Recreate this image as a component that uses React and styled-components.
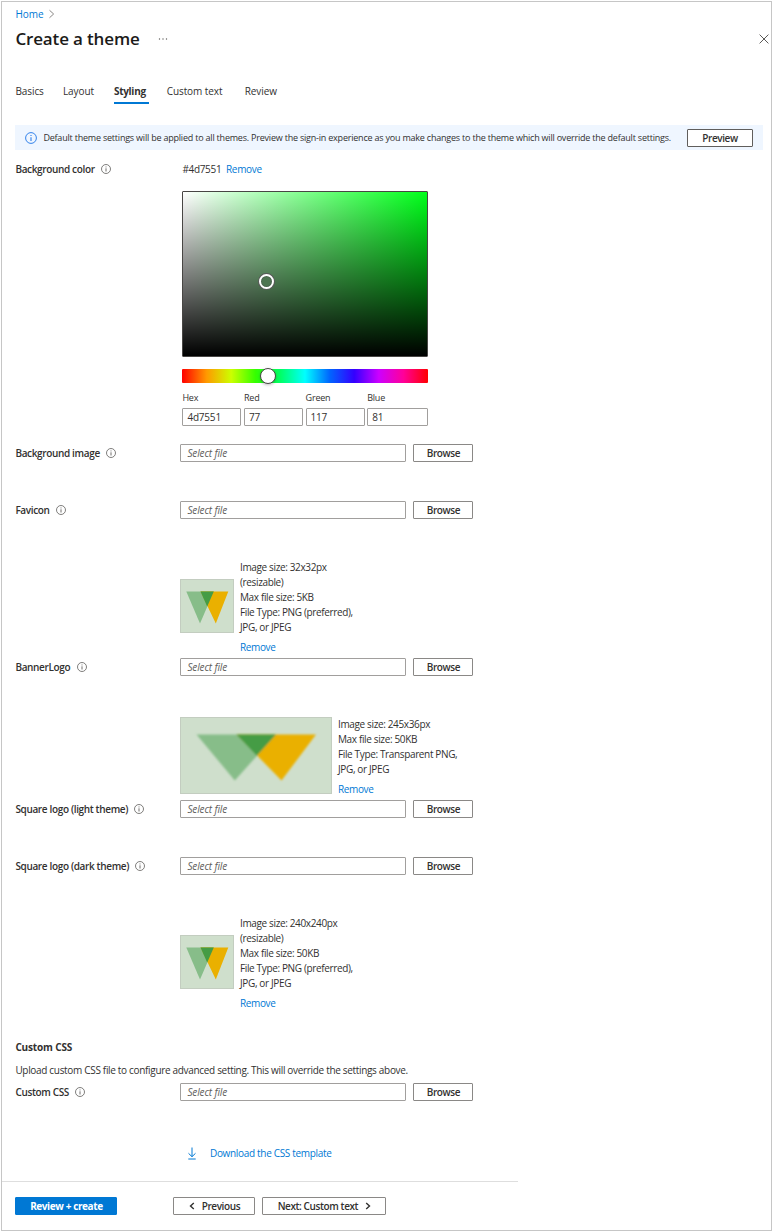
import React from 'react';
import styled, { createGlobalStyle, css } from 'styled-components';

const Global = createGlobalStyle`
  * { box-sizing: border-box; }
  body { margin: 0; background: #fff; font-family: 'Open Sans', 'Noto Sans', sans-serif; font-size: 10px; letter-spacing: -0.32px; color: #323130; }
  button, input { font: inherit; color: inherit; letter-spacing: inherit; margin: 0; }
`;

const blue = '#0078d4';

const Frame = styled.main`
  width: 771px;
  height: 1230px;
  margin: 1px 0 0 1px;
  border: 1px solid #c6c6c6;
  padding: 4px 8px 0 13.4px;
  display: flex;
  flex-direction: column;
  align-items: stretch;
  white-space: nowrap;
`;
const Link = styled.a`
  color: ${blue};
  text-decoration: none;
`;
const Crumbs = styled.nav`
  display: flex;
  align-items: center;
  gap: 5px;
  height: 16px;
  font-size: 10px;
  letter-spacing: -0.05px;
`;
const TitleRow = styled.header`
  display: flex;
  align-items: center;
  height: 34px;
  margin-top: 1px;
  margin-right: -5.5px;
`;
const Title = styled.h1`
  margin: 0;
  width: 143px;
  font-size: 17px;
  line-height: 24px;
  font-weight: 600;
  color: #1b1a19;
  letter-spacing: -0.15px;
`;
const CloseIcon = styled.svg`
  margin-left: auto;
`;
const Tabs = styled.nav`
  display: flex;
  gap: 18px;
  margin-top: 24px;
  height: 25px;
  font-size: 10px;
  letter-spacing: -0.08px;
`;
const Tab = styled.a`
  width: ${p => p.$w}px;
  line-height: 22px;
  ${p => p.$active && css`
    font-weight: 700;
    letter-spacing: -0.3px;
    border-bottom: 2px solid ${blue};
  `}
`;
const Notice = styled.section`
  display: flex;
  align-items: center;
  height: 26px;
  margin-top: 21px;
  padding: 1px 10px 0;
  background: #eff6ff;
`;
const NoticeText = styled.span`
  width: 644px;
  margin-left: 6px;
  font-size: 9px;
  letter-spacing: -0.21px;
`;
const Button = styled.button`
  display: flex;
  align-items: center;
  justify-content: center;
  gap: 7px;
  flex: none;
  width: ${p => p.$w}px;
  height: 18px;
  padding: 0;
  border: 1px solid ${p => (p.$primary ? blue : p.$dark ? '#605e5c' : '#8a8886')};
  border-radius: 1px;
  background: ${p => (p.$primary ? blue : '#fff')};
  color: ${p => (p.$primary ? '#fff' : '#323130')};
  font-weight: ${p => (p.$primary ? 700 : 600)};
  line-height: 16px;
  letter-spacing: -0.4px;
`;
const Row = styled.div`
  display: flex;
  align-items: center;
  height: 18px;
  margin-top: ${p => p.$mt}px;
`;
const Label = styled.div`
  display: flex;
  align-items: center;
  gap: 6.3px;
  width: ${p => p.$w || 165}px;
  font-weight: 600;
  letter-spacing: -0.35px;
`;
const FileInput = styled.input`
  width: 226px;
  height: 18px;
  margin-right: 7px;
  padding: 0 6px;
  border: 1px solid #a19f9d;
  border-radius: 1px;
  background: #fff;
  letter-spacing: -0.13px;
  &::placeholder { color: #605e5c; opacity: 1; font-style: italic; }
`;
const ColorValue = styled.span`
  width: 43.6px;
`;
const Picker = styled.section`
  width: 246px;
  margin: 13px 0 0 167px;
`;
const Field = styled.div`
  height: 166px;
  border: 1px solid #484644;
  border-radius: 1px;
  background: linear-gradient(to bottom, transparent, #000), linear-gradient(to right, #fff, #00ff1a);
  position: relative;
`;
const FieldThumb = styled.span`
  position: absolute;
  left: 75.5px;
  top: 82px;
  width: 15px;
  height: 15px;
  border: 2px solid #fff;
  border-radius: 50%;
  box-shadow: 0 0 0 1px #5a5a5a, inset 0 0 0 1px #4d6550;
  background: #4d7551;
`;
const Hue = styled.div`
  position: relative;
  height: 14px;
  margin-top: 12px;
  border-radius: 1px;
  background: linear-gradient(to right, #f00 0%, #ff9900 10%, #cf0 20%, #3f0 30%, #0f6 40%, #0ff 50%, #06f 60%, #30f 70%, #c0f 80%, #f09 90%, #f00 100%);
`;
const HueThumb = styled.span`
  position: absolute;
  left: 78px;
  top: -1px;
  width: 16px;
  height: 16px;
  border: 1px solid #484644;
  border-radius: 50%;
  background: #fff;
  box-shadow: 0 1px 3px rgba(0, 0, 0, 0.25);
`;
const Channels = styled.div`
  display: grid;
  grid-template-columns: 59px 59px 59px 61px;
  column-gap: 2.6px;
  margin-top: 8px;
`;
const Channel = styled.label`
  display: flex;
  flex-direction: column;
  gap: 3px;
  font-size: 9px;
  line-height: 14px;
  letter-spacing: -0.2px;
`;
const ChannelInput = styled.input`
  width: 100%;
  height: 18px;
  padding: 1px 4px 0;
  border: 1px solid #a19f9d;
  border-radius: 1px;
  font-size: 10px;
`;
const Upload = styled.div`
  display: flex;
  align-items: flex-end;
  gap: 5.6px;
  margin: ${p => p.$mt}px 0 0 165px;
`;
const Thumb = styled.svg`
  display: block;
  border: 1px solid #c3cdc0;
  background: #cfdfcc;
  margin-bottom: ${p => p.$mb}px;
`;
const Info = styled.div`
  display: flex;
  flex-direction: column;
  line-height: 15px;
  letter-spacing: -0.36px;
`;
const RemoveLink = styled(Link)`
  margin-top: 5px;
`;
const SectionTitle = styled.h2`
  margin: 28px 0 0;
  font-size: 10px;
  line-height: 16px;
  font-weight: 700;
  letter-spacing: -0.15px;
`;
const Paragraph = styled.p`
  margin: 8px 0 0;
  line-height: 15px;
`;
const Download = styled.div`
  display: flex;
  align-items: center;
  gap: 12.6px;
  height: 18px;
  margin: 44px 0 0 172px;
`;
const Footer = styled.footer`
  display: flex;
  width: 516px;
  height: 50px;
  margin: 19px 0 0 -13.4px;
  padding: 15px 0 0 13.4px;
  border-top: 1px solid #dedede;
`;
const PagerButton = styled(Button)`
  margin-left: ${p => p.$ml}px;
`;

const InfoIcon = ({ size = 10, color = '#605e5c' }) => (
  <svg width={size} height={size} viewBox="0 0 10 10" fill="none" stroke={color}>
    <circle cx="5" cy="5" r="4.5" strokeWidth="0.8" />
    <path d="M5 4.3V7.5M5 2.5V3.4" strokeWidth="0.9" />
  </svg>
);

const Chevron = ({ left, color = '#323130', w = 6, h = 8, sw = 1.4 }) => (
  <svg width={w} height={h} viewBox="0 0 6 8" fill="none" stroke={color} strokeWidth={sw}>
    <path d={left ? 'M4.8 1 1.5 4l3.3 3' : 'M1.2 1l3.3 3-3.3 3'} />
  </svg>
);

const SquareLogo = () => (
  <Thumb width="54" height="54" viewBox="0 0 52 52" $mb={22}>
    <defs><filter id="softSquare"><feGaussianBlur stdDeviation="0.35" /></filter></defs>
    <g filter="url(#softSquare)">
      <path d="M5.3 11.5H32.8L19 43.5Z" fill="#87bd89" />
      <path d="M19.5 11.5H47.3L34.8 43.5Z" fill="#eab000" />
      <path d="M19.5 11.5H32.8L26.2 26.5Z" fill="#449c45" />
    </g>
  </Thumb>
);

const BannerLogo = () => (
  <Thumb width="152" height="77" viewBox="0 0 150 75" $mb={3}>
    <defs><filter id="softBanner"><feGaussianBlur stdDeviation="0.9" /></filter></defs>
    <g filter="url(#softBanner)">
      <path d="M15.5 16.5H95L53.8 62.5Z" fill="#87bd89" />
      <path d="M55.5 16.5H135L100.5 62.5Z" fill="#eab000" />
      <path d="M55.5 16.5H95L75.8 37.8Z" fill="#449c45" />
    </g>
  </Thumb>
);

const FileRow = ({ label, mt }) => (
  <Row $mt={mt}>
    <Label>{label}<InfoIcon /></Label>
    <FileInput placeholder="Select file" />
    <Button $w={60}>Browse</Button>
  </Row>
);

const Details = ({ lines }) => (
  <Info>
    {lines.map(l => <span key={l}>{l}</span>)}
    <RemoveLink>Remove</RemoveLink>
  </Info>
);

export default function App() {
  return (
    <>
      <Global />
      <Frame>
        <Crumbs>
          <Link>Home</Link>
          <Chevron color="#8a8886" w={7.5} h={10} sw={0.8} />
        </Crumbs>
        <TitleRow>
          <Title>Create a theme</Title>
          <svg width="10" height="2" viewBox="0 0 10 2" fill="#605e5c">
            <circle cx="1.5" cy="1" r="0.7" /><circle cx="5" cy="1" r="0.7" /><circle cx="8.5" cy="1" r="0.7" />
          </svg>
          <CloseIcon width="10" height="10" viewBox="0 0 10 10" stroke="#484644" strokeWidth="0.9">
            <path d="M0.6 0.6L9.4 9.4M9.4 0.6L0.6 9.4" />
          </CloseIcon>
        </TitleRow>
        <Tabs>
          <Tab $w={29.6}>Basics</Tab>
          <Tab $w={33}>Layout</Tab>
          <Tab $w={34.7} $active>Styling</Tab>
          <Tab $w={60}>Custom text</Tab>
          <Tab $w={34}>Review</Tab>
        </Tabs>
        <Notice>
          <InfoIcon size={12} color="#2b7de9" />
          <NoticeText>Default theme settings will be applied to all themes. Preview the sign-in experience as you make changes to the theme which will override the default settings.</NoticeText>
          <Button $w={66} $dark>Preview</Button>
        </Notice>
        <Row $mt={10}>
          <Label $w={167}>Background color<InfoIcon /></Label>
          <ColorValue>#4d7551</ColorValue>
          <Link>Remove</Link>
        </Row>
        <Picker>
          <Field><FieldThumb /></Field>
          <Hue><HueThumb /></Hue>
          <Channels>
            {[['Hex', '4d7551'], ['Red', '77'], ['Green', '117'], ['Blue', '81']].map(([name, value]) => (
              <Channel key={name}>{name}<ChannelInput defaultValue={value} /></Channel>
            ))}
          </Channels>
        </Picker>
        <FileRow label="Background image" mt={18} />
        <FileRow label="Favicon" mt={39} />
        <Upload $mt={41}>
          <SquareLogo />
          <Details lines={['Image size: 32x32px', '(resizable)', 'Max file size: 5KB', 'File Type: PNG (preferred),', 'JPG, or JPEG']} />
        </Upload>
        <FileRow label="BannerLogo" mt={3} />
        <Upload $mt={41}>
          <BannerLogo />
          <Details lines={['Image size: 245x36px', 'Max file size: 50KB', 'File Type: Transparent PNG,', 'JPG, or JPEG']} />
        </Upload>
        <FileRow label="Square logo (light theme)" mt={3} />
        <FileRow label="Square logo (dark theme)" mt={39} />
        <Upload $mt={41}>
          <SquareLogo />
          <Details lines={['Image size: 240x240px', '(resizable)', 'Max file size: 50KB', 'File Type: PNG (preferred),', 'JPG, or JPEG']} />
        </Upload>
        <SectionTitle>Custom CSS</SectionTitle>
        <Paragraph>Upload custom CSS file to configure advanced setting. This will override the settings above.</Paragraph>
        <FileRow label="Custom CSS" mt={5} />
        <Download>
          <svg width="10" height="13" viewBox="0 0 10 13" fill="none" stroke={blue} strokeWidth="1">
            <path d="M5 0.5V9.5M1.5 6.3L5 9.7L8.5 6.3M1.3 12H8.7" />
          </svg>
          <Link>Download the CSS template</Link>
        </Download>
        <Footer>
          <Button $w={102} $primary>Review + create</Button>
          <PagerButton $w={82} $ml={56}><Chevron left />Previous</PagerButton>
          <PagerButton $w={124} $ml={7}>Next: Custom text<Chevron /></PagerButton>
        </Footer>
      </Frame>
    </>
  );
}
